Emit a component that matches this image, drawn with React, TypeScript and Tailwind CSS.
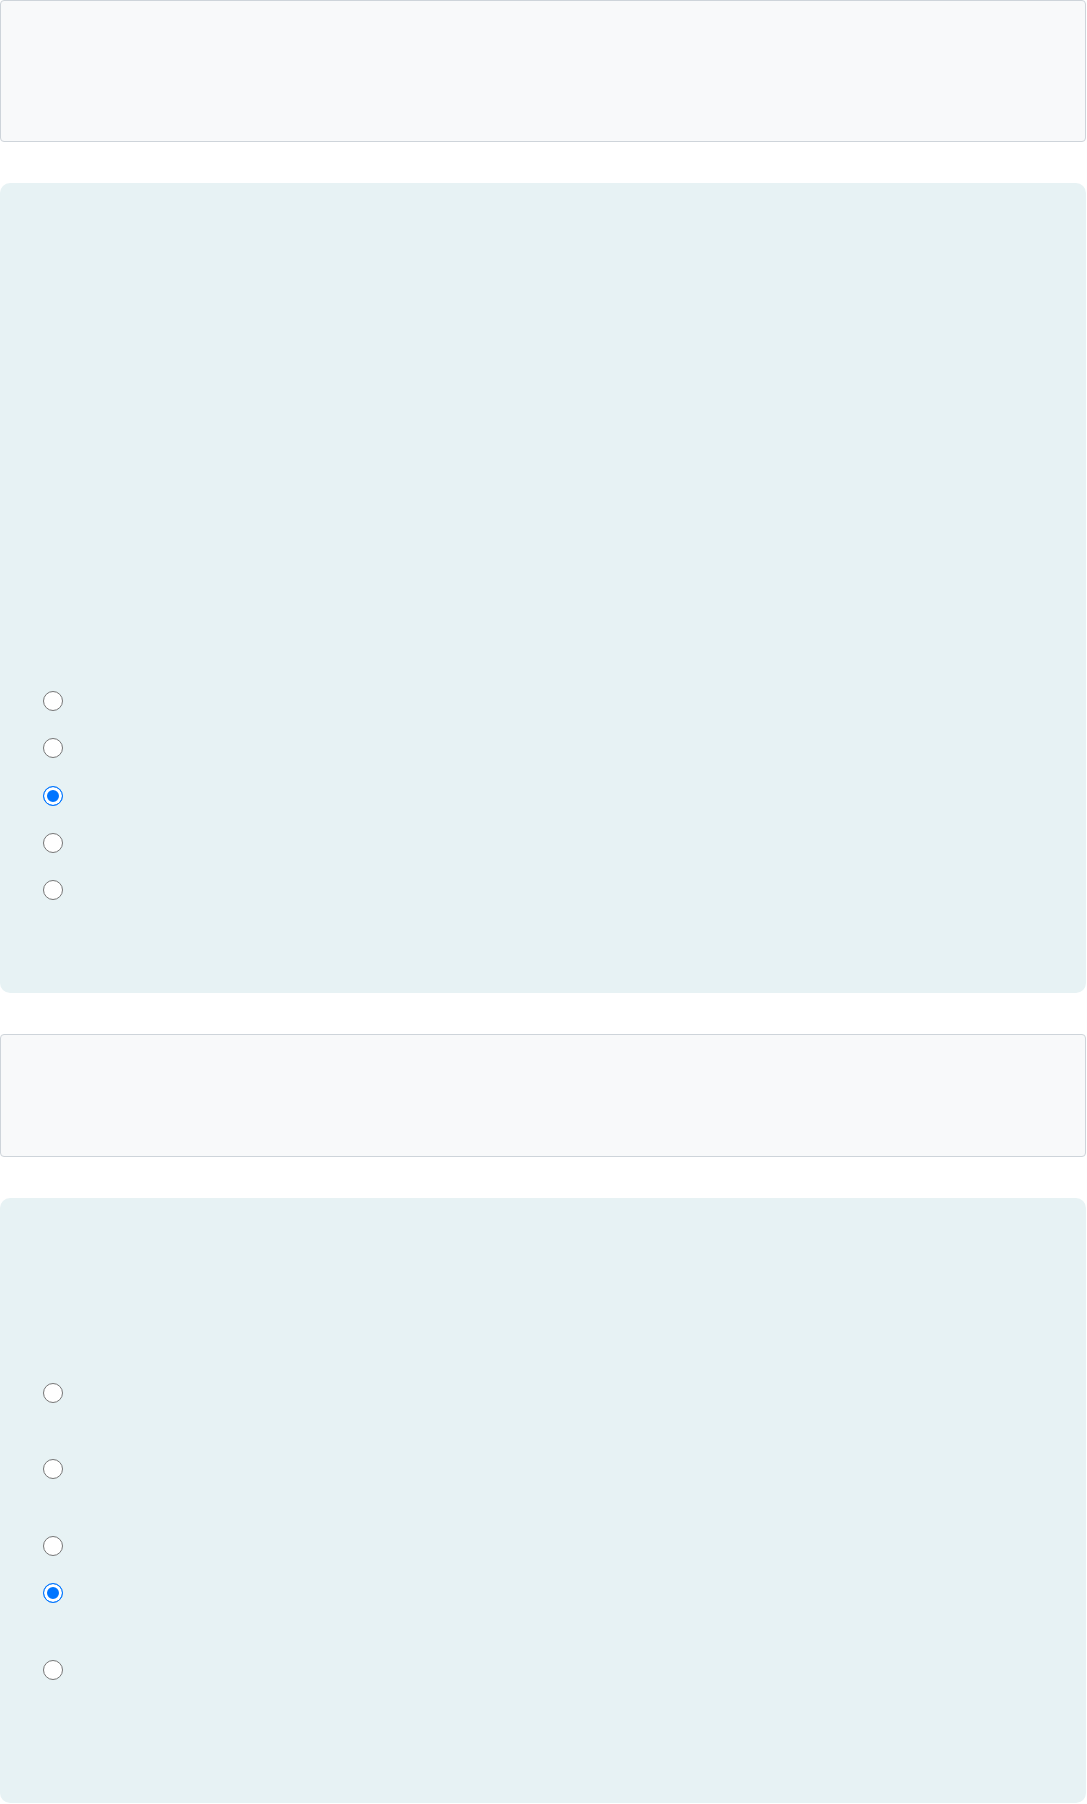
/**
 * Quiz page
 * Two prompt boxes, each followed by a panel of answer options
 */

// ============================================================================
// Types
// ============================================================================

interface OptionRow {
    height: string;
    checked?: boolean;
}

interface QuestionPanelProps {
    name: string;
    topPad: string;
    bottomPad: string;
    rows: OptionRow[];
}

// ============================================================================
// Components
// ============================================================================

function PromptBox({ height }: { height: string }) {
    return <div className={`w-full ${height} rounded-[4px] border border-[#ced4da] bg-[#f8f9fa]`} />;
}

function QuestionPanel({ name, topPad, bottomPad, rows }: QuestionPanelProps) {
    return (
        <div className={`w-full rounded-[10px] bg-[#e7f2f4] pl-[42.5px] ${topPad} ${bottomPad}`}>
            <div className="flex flex-col">
                {rows.map((row, index) => (
                    <label key={index} className={`flex items-start gap-3 pt-[13.5px] ${row.height}`}>
                        <input
                            type="radio"
                            name={name}
                            defaultChecked={row.checked}
                            className="m-0 h-5 w-5 shrink-0 appearance-none rounded-full border-[1.5px] border-[#767676] bg-white checked:border-[#0075ff] checked:bg-[#0075ff] checked:shadow-[inset_0_0_0_3px_#ffffff]"
                        />
                    </label>
                ))}
            </div>
        </div>
    );
}

export default function App() {
    return (
        <div className="w-[1086px] bg-white font-['Liberation_Sans',Arial,sans-serif]">
            <div className="flex flex-col">
                <PromptBox height="h-[142px]" />
                <div className="mt-[41px]">
                    <QuestionPanel
                        name="q1"
                        topPad="pt-[494.5px]"
                        bottomPad="pb-[79px]"
                        rows={[
                            { height: 'h-[47.3px]' },
                            { height: 'h-[47.3px]' },
                            { height: 'h-[47.3px]', checked: true },
                            { height: 'h-[47.3px]' },
                            { height: 'h-[47.3px]' },
                        ]}
                    />
                </div>
                <div className="mt-[41px]">
                    <PromptBox height="h-[123px]" />
                </div>
                <div className="mt-[41px]">
                    <QuestionPanel
                        name="q2"
                        topPad="pt-[171.5px]"
                        bottomPad="pb-[109.5px]"
                        rows={[
                            { height: 'h-[76.5px]' },
                            { height: 'h-[77px]' },
                            { height: 'h-[47px]' },
                            { height: 'h-[77px]', checked: true },
                            { height: 'h-[47px]' },
                        ]}
                    />
                </div>
            </div>
        </div>
    );
}
